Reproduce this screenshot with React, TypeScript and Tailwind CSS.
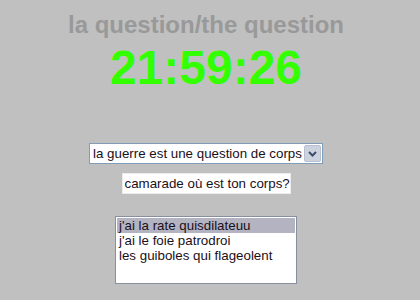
const font = { fontFamily: '"Liberation Sans", Arial, sans-serif' }

function Chevron() {
  return (
    <svg width="9" height="6" viewBox="0 0 9 6">
      <path d="M1 1 L4.5 4.5 L8 1" fill="none" stroke="#3c4d6e" strokeWidth="2" />
    </svg>
  )
}

const options = ["j'ai la rate quisdilateuu", "j'ai le foie patrodroi", 'les guiboles qui flageolent']

export default function App() {
  return (
    <div className="w-[420px] h-[300px] bg-[#c0c0c0] overflow-hidden" style={font}>
      <div className="w-[412px] flex flex-col items-center">
        <h1 className="mt-[13px] text-[24px] leading-[24px] font-bold text-[#999999]">la question/the question</h1>
        <div className="mt-[7px] text-[48px] leading-[48px] font-bold text-[#33ff00]">21:59:26</div>

        {/* fake select */}
        <div className="mt-[51px] w-[234px] h-[21px] flex items-stretch border border-[#7f9db9] bg-white">
          <span className="flex-1 pl-[3px] text-[13.33px] leading-[19px] text-[#1a0f1a] whitespace-nowrap">la guerre est une question de corps</span>
          <div className="w-[17px] my-[1px] mr-[1px] flex items-center justify-center rounded-[2px] border border-[#b8bfd0] bg-[#cdd2df]">
            <Chevron />
          </div>
        </div>

        <div className="mt-[9px] w-[169px] h-[21px] bg-white border border-[#ececec] pl-[2px] text-[13.33px] leading-[19px] text-[#1a0f1a] whitespace-nowrap">
          camarade où est ton corps?
        </div>

        <div className="mt-[22px] w-[182px] h-[68px] border border-[#8890a0] bg-white p-[1px]">
          {options.map((o, i) => (
            <div key={o} className={`h-[15px] pl-[2px] text-[13.33px] leading-[15px] text-[#1a0f1a] whitespace-nowrap ${i === 0 ? 'bg-[#b3b3c1]' : ''}`}>
              {o}
            </div>
          ))}
        </div>
      </div>
    </div>
  )
}
